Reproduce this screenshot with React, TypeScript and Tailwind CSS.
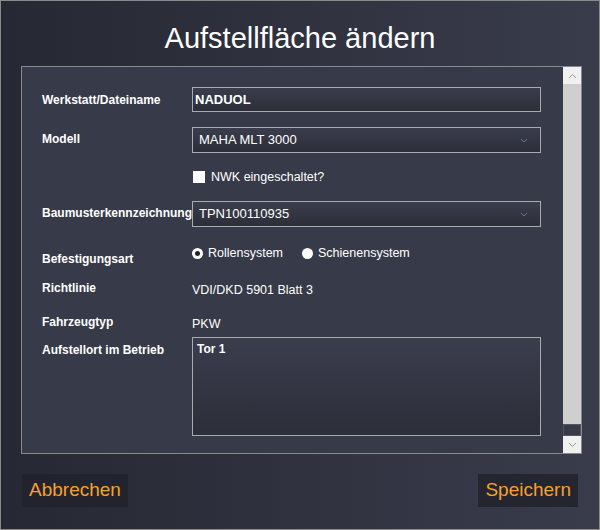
export default function App() {
  const f = { fontFamily: '"Liberation Sans", Arial, sans-serif' } as React.CSSProperties;
  const inp = "h-[25px] border border-[#a9abaf] bg-gradient-to-b from-[#3a3d4c] to-[#2c2e39] text-white text-[13px] flex items-center px-[2px]";
  const lab = "w-[170px] pl-[20px] font-bold whitespace-nowrap";
  const chev = (
    <svg width="8" height="5" viewBox="0 0 8 5" className="ml-auto mr-[6px]"><path d="M1 1l3 3 3-3" stroke="#777" fill="none" /></svg>
  );
  return (
    <div style={f} className="w-[600px] h-[530px] border border-[#8a8a8a] bg-gradient-to-r from-[#262833] to-[#393c4b] flex flex-col">
      <div className="h-[65px] flex items-center justify-center text-white text-[29px] pt-[10px]">Aufstellfläche ändern</div>
      <div className="ml-[20px] w-[561px] h-[388px] border border-[#8a8a8a] bg-[#373a48] flex">
        <div className="flex-1 flex flex-col text-white text-[12px]">
          <div className="flex items-center mt-[20px] h-[25px]">
            <div className={lab}>Werkstatt/Dateiname</div>
            <div className={inp + " w-[349px] font-bold"}>NADUOL</div>
          </div>
          <div className="flex items-center mt-[15px] h-[26px]">
            <div className={lab + " -mt-[2px]"}>Modell</div>
            <div className={inp + " w-[349px] h-[26px] px-[6px]"}>MAHA MLT 3000{chev}</div>
          </div>
          <div className="flex items-center mt-[17px] pl-[171px] h-[14px] text-[12.5px]">
            <div className="w-[12px] h-[12px] bg-white mr-[6px]" />NWK eingeschaltet?
          </div>
          <div className="flex items-center mt-[17px] h-[26px]">
            <div className={lab + " -mt-[3px]"}>Baumusterkennzeichnung</div>
            <div className={inp + " w-[349px] h-[26px] px-[6px]"}>TPN100110935{chev}</div>
          </div>
          <div className="flex mt-[18px] h-[20px]">
            <div className={lab + " pt-[5px]"}>Befestigungsart</div>
            <div className="flex items-center gap-[5px] text-[12.5px] h-[12px] pt-[4px]">
              <div className="w-[11px] h-[11px] rounded-full bg-white flex items-center justify-center"><div className="w-[5px] h-[5px] rounded-full bg-[#222]" /></div>
              <span className="mr-[14px]">Rollensystem</span>
              <div className="w-[11px] h-[11px] rounded-full bg-white" />
              <span>Schienensystem</span>
            </div>
          </div>
          <div className="flex mt-[15px] h-[20px] items-center">
            <div className={lab + " -mt-[4px]"}>Richtlinie</div>
            <div className="text-[12.5px]">VDI/DKD 5901 Blatt 3</div>
          </div>
          <div className="flex mt-[14px] h-[20px] items-center">
            <div className={lab + " -mt-[4px]"}>Fahrzeugtyp</div>
            <div className="text-[12.5px]">PKW</div>
          </div>
          <div className="flex mt-[3px]">
            <div className={lab + " pt-[4px]"}>Aufstellort im Betrieb</div>
            <div className="w-[349px] h-[99px] border border-[#a9abaf] bg-gradient-to-b from-[#3a3d4c] to-[#2c2e39] font-bold px-[4px] py-[2px]">Tor 1</div>
          </div>
        </div>
        <div className="w-[18px] flex flex-col bg-[#373a48]">
          <div className="h-[17px] bg-[#f0f0f0] flex items-center justify-center"><svg width="9" height="6" viewBox="0 0 9 6"><path d="M1 5l3.5-3.5L8 5" stroke="#999" fill="none" /></svg></div>
          <div className="h-[340px] bg-[#cfcfcf]" />
          <div className="flex-1 border border-[#555]" />
          <div className="h-[17px] bg-[#f0f0f0] flex items-center justify-center"><svg width="9" height="6" viewBox="0 0 9 6"><path d="M1 1l3.5 3.5L8 1" stroke="#999" fill="none" /></svg></div>
        </div>
      </div>
      <div className="flex justify-between px-[21px] mt-[20px]">
        <div className="h-[33px] px-[7px] bg-[#22232c] text-[#f5a032] text-[19px] flex items-center">Abbrechen</div>
        <div className="h-[33px] px-[7px] bg-[#24252f] text-[#f5a032] text-[19px] flex items-center">Speichern</div>
      </div>
    </div>
  );
}
